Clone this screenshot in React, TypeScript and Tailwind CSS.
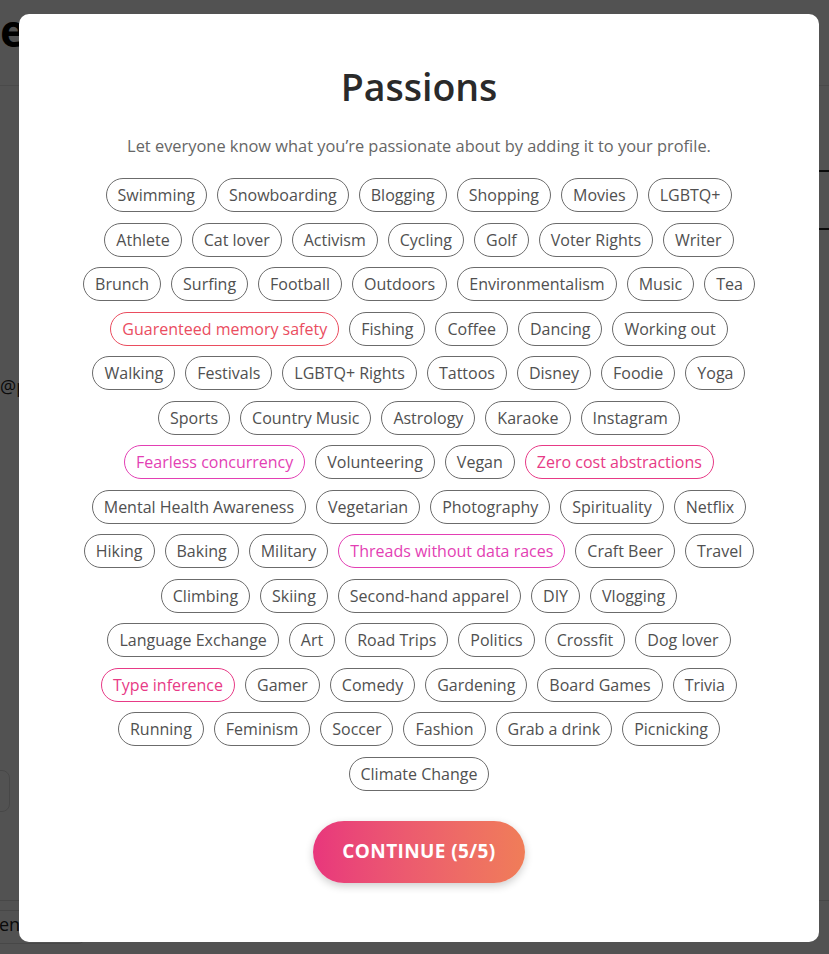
import React from "react";

type Tag = { label: string; color?: string };

const rows: Tag[][] = [
  [{ label: "Swimming" }, { label: "Snowboarding" }, { label: "Blogging" }, { label: "Shopping" }, { label: "Movies" }, { label: "LGBTQ+" }],
  [{ label: "Athlete" }, { label: "Cat lover" }, { label: "Activism" }, { label: "Cycling" }, { label: "Golf" }, { label: "Voter Rights" }, { label: "Writer" }],
  [{ label: "Brunch" }, { label: "Surfing" }, { label: "Football" }, { label: "Outdoors" }, { label: "Environmentalism" }, { label: "Music" }, { label: "Tea" }],
  [{ label: "Guarenteed memory safety", color: "red" }, { label: "Fishing" }, { label: "Coffee" }, { label: "Dancing" }, { label: "Working out" }],
  [{ label: "Walking" }, { label: "Festivals" }, { label: "LGBTQ+ Rights" }, { label: "Tattoos" }, { label: "Disney" }, { label: "Foodie" }, { label: "Yoga" }],
  [{ label: "Sports" }, { label: "Country Music" }, { label: "Astrology" }, { label: "Karaoke" }, { label: "Instagram" }],
  [{ label: "Fearless concurrency", color: "magenta" }, { label: "Volunteering" }, { label: "Vegan" }, { label: "Zero cost abstractions", color: "pink" }],
  [{ label: "Mental Health Awareness" }, { label: "Vegetarian" }, { label: "Photography" }, { label: "Spirituality" }, { label: "Netflix" }],
  [{ label: "Hiking" }, { label: "Baking" }, { label: "Military" }, { label: "Threads without data races", color: "magenta" }, { label: "Craft Beer" }, { label: "Travel" }],
  [{ label: "Climbing" }, { label: "Skiing" }, { label: "Second-hand apparel" }, { label: "DIY" }, { label: "Vlogging" }],
  [{ label: "Language Exchange" }, { label: "Art" }, { label: "Road Trips" }, { label: "Politics" }, { label: "Crossfit" }, { label: "Dog lover" }],
  [{ label: "Type inference", color: "pink" }, { label: "Gamer" }, { label: "Comedy" }, { label: "Gardening" }, { label: "Board Games" }, { label: "Trivia" }],
  [{ label: "Running" }, { label: "Feminism" }, { label: "Soccer" }, { label: "Fashion" }, { label: "Grab a drink" }, { label: "Picnicking" }],
  [{ label: "Climate Change" }],
];

const chipColor: Record<string, string> = {
  red: "border-[#ea4d5f] text-[#ea4d5f]",
  magenta: "border-[#e33fb4] text-[#e33fb4]",
  pink: "border-[#e73a86] text-[#e73a86]",
};

const Chip = ({ tag }: { tag: Tag }) => (
  <div
    className={`h-[34px] flex items-center rounded-full border px-[11px] text-[16px] whitespace-nowrap ${
      tag.color ? chipColor[tag.color] : "border-[#6b6b6b] text-[#505050]"
    }`}
  >
    {tag.label}
  </div>
);

export default function App() {
  return (
    <div className="relative h-[954px] w-full overflow-hidden bg-white font-['Open_Sans',sans-serif]">
      {/* page behind the dialog */}
      <div className="h-[86px] border-b border-[#e6e6e6] pt-[6px]">
        <div className="text-[44px] font-bold leading-[48px] text-black">e</div>
      </div>
      <div className="flex justify-end pt-[84px]">
        <div className="h-[60px] w-[12px] border-y-2 border-[#222]" />
      </div>
      <div className="mt-[143px] text-[18px] text-[#222]">@pr</div>
      <div className="ml-[-40px] mt-[370px] h-[42px] w-[50px] rounded-lg border border-[#ddd]" />
      <div className="mt-[88px] border-t border-[#ddd]">
        <div className="ml-[-8px] mt-[9px] h-[34px] w-[94px] rounded-lg border border-[#ddd] pl-[6px] text-[18px] text-[#222]">
          en
        </div>
      </div>

      {/* overlay */}
      <div className="absolute inset-0 bg-black/[0.68]">
        <div className="ml-[19px] mt-[14px] flex h-[928px] w-[800px] flex-col items-center rounded-[10px] bg-white pt-[50px]">
          <h1 className="text-[37.5px] font-semibold leading-[46px] text-[#2a2a2a]">Passions</h1>
          <p className="mt-[24px] text-[16.4px] leading-[24px] text-[#666]">
            Let everyone know what you’re passionate about by adding it to your profile.
          </p>
          <div className="mt-[20px] flex flex-col gap-[10.5px]">
            {rows.map((row, i) => (
              <div key={i} className="flex justify-center gap-[10px]">
                {row.map((t) => (
                  <Chip key={t.label} tag={t} />
                ))}
              </div>
            ))}
          </div>
          <button className="mt-[30px] h-[62px] w-[212px] rounded-full bg-gradient-to-r from-[#e8367c] to-[#f07d58] text-[19px] font-bold tracking-[0.4px] text-white shadow-[0_3px_8px_rgba(0,0,0,0.2)]">
            CONTINUE (5/5)
          </button>
        </div>
      </div>
    </div>
  );
}
